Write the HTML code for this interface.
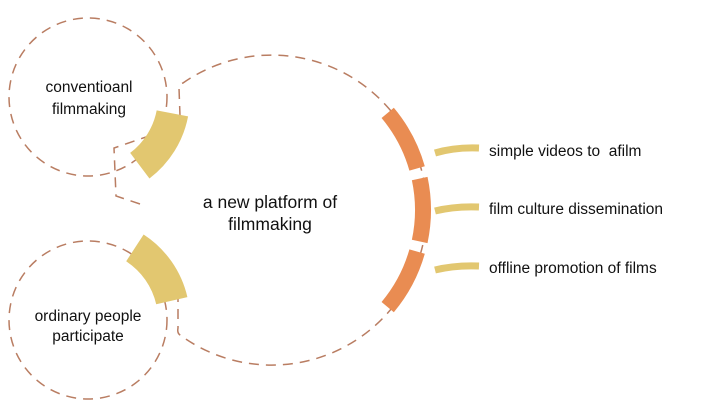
<!DOCTYPE html>
<html><head><meta charset="utf-8"><style>
html,body{margin:0;padding:0;background:#fff;}
svg{display:block;}
text{font-family:"Liberation Sans",sans-serif;font-size:15.5px;fill:#111;white-space:pre;}
</style></head><body>
<svg width="720" height="413" viewBox="0 0 720 413" xmlns="http://www.w3.org/2000/svg">
<g fill="none" stroke="#b97d62" stroke-width="1.5" stroke-dasharray="10 7">
<circle cx="88" cy="97" r="79"/>
<circle cx="88" cy="320" r="79"/>
<path d="M180,116 L179,88 Q179,84 183,83 A155,155 0 1 1 180,335 Q177,333 178,328 L178,296"/>
<path d="M140,204 L116,196 L114,148 L146,137"/>
</g>
<g fill="none" stroke="#e2c770" stroke-width="32">
<path d="M172.4,113.4 A86,86 0 0 1 139.8,165.7"/>
<path d="M134.9,247.9 A86,86 0 0 1 171.8,300.7"/>
</g>
<g fill="none" stroke="#e98c52" stroke-width="16">
<path d="M387.7,112.9 A151,151 0 0 1 417.1,168.4"/>
<path d="M419.7,178.6 A151,151 0 0 1 419.7,241.4"/>
<path d="M417.1,251.6 A151,151 0 0 1 387.7,307.1"/>
</g>
<g fill="none" stroke="#e2c770" stroke-width="7">
<path d="M435,153 Q455,147 479,148"/>
<path d="M435,211 Q455,206 479,207"/>
<path d="M435,270 Q455,265 479,266"/>
</g>
<text x="89" y="92" text-anchor="middle">conventioanl</text>
<text x="89" y="114" text-anchor="middle">filmmaking</text>
<text x="88" y="321" text-anchor="middle">ordinary people</text>
<text x="88" y="341" text-anchor="middle">participate</text>
<text x="270" y="208" text-anchor="middle" style="font-size:17.5px">a new platform of</text>
<text x="270" y="230" text-anchor="middle" style="font-size:17.5px">filmmaking</text>
<text x="489" y="156">simple videos to  afilm</text>
<text x="489" y="214">film culture dissemination</text>
<text x="489" y="273">offline promotion of films</text>
</svg>
</body></html>
